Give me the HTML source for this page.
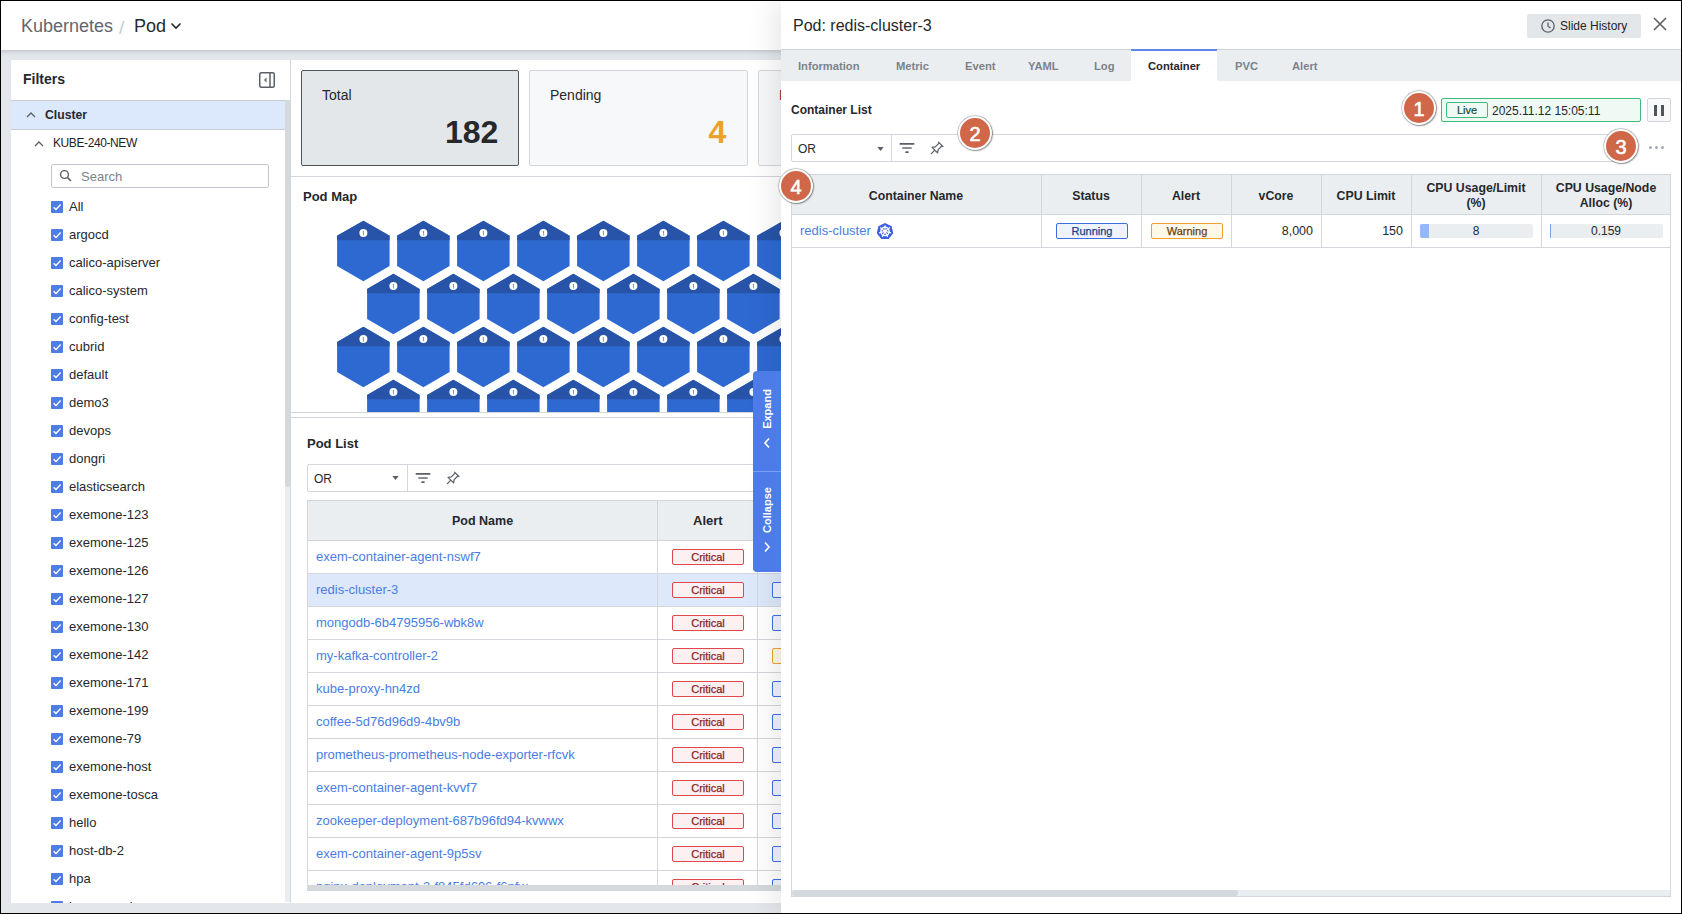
<!DOCTYPE html><html><head><meta charset="utf-8"><title>Pod</title><style>
*{box-sizing:border-box;margin:0;padding:0}
html,body{width:1682px;height:914px;overflow:hidden}
body{position:relative;background:#e3e6ea;font-family:"Liberation Sans",sans-serif;color:#25282c}
.a{position:absolute}
.a>svg{display:block}
.t{position:absolute;white-space:nowrap;line-height:1}
.cb{position:absolute;width:12px;height:12px;background:#4d7ce8;border-radius:1px}
.cb svg{position:absolute;left:0;top:0}
.lbl{position:absolute;white-space:nowrap;font-size:13px;line-height:16px;color:#25282c}
.link{color:#4a7de4}
.badge{position:absolute;height:16px;border:1px solid;border-radius:2px;font-size:11px;line-height:14px;text-align:center}
.crit{border-color:#e0474c;background:#fdf0f0;color:#8a1f1f;-webkit-text-stroke:0.25px #8a1f1f}
.circ{position:absolute;width:34px;height:34px;border-radius:50%;background:#d06749;border:2px solid #fff;box-shadow:0 0 1px 0.5px rgba(0,0,0,.4),1px 1px 1.5px rgba(0,0,0,.3);color:#fff;font-size:20px;font-weight:400;-webkit-text-stroke:0.6px #fff;line-height:32px;text-align:center}
</style></head><body>
<div class="a" style="left:0;top:0;width:1682px;height:50px;background:#fff"></div>
<div class="a" style="left:0;top:50px;width:1682px;height:8px;background:linear-gradient(#c6cacf 0px,#d4d8dc 2px,#dfe2e6 4px,#e3e6ea 6px)"></div>
<div class="t" style="left:21px;top:17px;font-size:18px;color:#5f6670">Kubernetes</div>
<div class="t" style="left:119px;top:18px;font-size:19px;color:#c6cad0">/</div>
<div class="t" style="left:134px;top:17px;font-size:18px;color:#25282c">Pod</div>
<svg class="a" style="left:170px;top:21px" width="12" height="10" viewBox="0 0 12 10"><path d="M1.5 2.5 L6 7 L10.5 2.5" fill="none" stroke="#25282c" stroke-width="1.6"/></svg>
<div class="a" style="left:11px;top:60px;width:280px;height:843px;background:#fff;border-right:1px solid #d3d6db"></div>
<div class="t" style="left:23px;top:72px;font-size:14px;font-weight:700">Filters</div>
<svg class="a" style="left:259px;top:72px" width="16" height="16" viewBox="0 0 16 16"><rect x="0.75" y="0.75" width="14.5" height="14.5" rx="1.5" fill="none" stroke="#5b6068" stroke-width="1.5"/><line x1="11" y1="1" x2="11" y2="15" stroke="#5b6068" stroke-width="1.5"/><path d="M7.5 5.5 L5 8 L7.5 10.5 Z" fill="#5b6068"/></svg>
<div class="a" style="left:11px;top:100px;width:274px;height:30px;background:#dce8fb;border-top:1px solid #c9cdd3;border-bottom:1px solid #c9cdd3"></div>
<svg class="a" style="left:26px;top:111px" width="10" height="8" viewBox="0 0 10 8"><path d="M1 6 L5 2 L9 6" fill="none" stroke="#5b6068" stroke-width="1.3"/></svg>
<div class="t" style="left:45px;top:109px;font-size:12.2px;font-weight:700">Cluster</div>
<svg class="a" style="left:34px;top:140px" width="10" height="8" viewBox="0 0 10 8"><path d="M1 6 L5 2 L9 6" fill="none" stroke="#5b6068" stroke-width="1.3"/></svg>
<div class="t" style="left:53px;top:137px;font-size:12px;letter-spacing:-0.4px;color:#1f2226">KUBE-240-NEW</div>
<div class="a" style="left:51px;top:164px;width:218px;height:24px;border:1px solid #c4c8ce;border-radius:2px;background:#fff"></div>
<svg class="a" style="left:59px;top:169px" width="14" height="14" viewBox="0 0 14 14"><circle cx="5.5" cy="5.5" r="3.9" fill="none" stroke="#5b6068" stroke-width="1.4"/><line x1="8.4" y1="8.4" x2="12" y2="12" stroke="#5b6068" stroke-width="1.6"/></svg>
<div class="t" style="left:81px;top:170px;font-size:13px;color:#7b828c">Search</div>
<div class="a" style="left:285px;top:100px;width:5px;height:802px;background:#ebeef1"></div>
<div class="a" style="left:285px;top:100px;width:5px;height:387px;background:#d5d8dc;border-radius:0 0 2px 2px"></div>
<div class="cb" style="left:51px;top:201px"><svg width="12" height="12" viewBox="0 0 12 12"><path d="M2.6 6.2 L5 8.5 L9.6 3.6" fill="none" stroke="#fff" stroke-width="1.4"/></svg></div>
<div class="lbl" style="left:69px;top:199px">All</div>
<div class="cb" style="left:51px;top:229px"><svg width="12" height="12" viewBox="0 0 12 12"><path d="M2.6 6.2 L5 8.5 L9.6 3.6" fill="none" stroke="#fff" stroke-width="1.4"/></svg></div>
<div class="lbl" style="left:69px;top:227px">argocd</div>
<div class="cb" style="left:51px;top:257px"><svg width="12" height="12" viewBox="0 0 12 12"><path d="M2.6 6.2 L5 8.5 L9.6 3.6" fill="none" stroke="#fff" stroke-width="1.4"/></svg></div>
<div class="lbl" style="left:69px;top:255px">calico-apiserver</div>
<div class="cb" style="left:51px;top:285px"><svg width="12" height="12" viewBox="0 0 12 12"><path d="M2.6 6.2 L5 8.5 L9.6 3.6" fill="none" stroke="#fff" stroke-width="1.4"/></svg></div>
<div class="lbl" style="left:69px;top:283px">calico-system</div>
<div class="cb" style="left:51px;top:313px"><svg width="12" height="12" viewBox="0 0 12 12"><path d="M2.6 6.2 L5 8.5 L9.6 3.6" fill="none" stroke="#fff" stroke-width="1.4"/></svg></div>
<div class="lbl" style="left:69px;top:311px">config-test</div>
<div class="cb" style="left:51px;top:341px"><svg width="12" height="12" viewBox="0 0 12 12"><path d="M2.6 6.2 L5 8.5 L9.6 3.6" fill="none" stroke="#fff" stroke-width="1.4"/></svg></div>
<div class="lbl" style="left:69px;top:339px">cubrid</div>
<div class="cb" style="left:51px;top:369px"><svg width="12" height="12" viewBox="0 0 12 12"><path d="M2.6 6.2 L5 8.5 L9.6 3.6" fill="none" stroke="#fff" stroke-width="1.4"/></svg></div>
<div class="lbl" style="left:69px;top:367px">default</div>
<div class="cb" style="left:51px;top:397px"><svg width="12" height="12" viewBox="0 0 12 12"><path d="M2.6 6.2 L5 8.5 L9.6 3.6" fill="none" stroke="#fff" stroke-width="1.4"/></svg></div>
<div class="lbl" style="left:69px;top:395px">demo3</div>
<div class="cb" style="left:51px;top:425px"><svg width="12" height="12" viewBox="0 0 12 12"><path d="M2.6 6.2 L5 8.5 L9.6 3.6" fill="none" stroke="#fff" stroke-width="1.4"/></svg></div>
<div class="lbl" style="left:69px;top:423px">devops</div>
<div class="cb" style="left:51px;top:453px"><svg width="12" height="12" viewBox="0 0 12 12"><path d="M2.6 6.2 L5 8.5 L9.6 3.6" fill="none" stroke="#fff" stroke-width="1.4"/></svg></div>
<div class="lbl" style="left:69px;top:451px">dongri</div>
<div class="cb" style="left:51px;top:481px"><svg width="12" height="12" viewBox="0 0 12 12"><path d="M2.6 6.2 L5 8.5 L9.6 3.6" fill="none" stroke="#fff" stroke-width="1.4"/></svg></div>
<div class="lbl" style="left:69px;top:479px">elasticsearch</div>
<div class="cb" style="left:51px;top:509px"><svg width="12" height="12" viewBox="0 0 12 12"><path d="M2.6 6.2 L5 8.5 L9.6 3.6" fill="none" stroke="#fff" stroke-width="1.4"/></svg></div>
<div class="lbl" style="left:69px;top:507px">exemone-123</div>
<div class="cb" style="left:51px;top:537px"><svg width="12" height="12" viewBox="0 0 12 12"><path d="M2.6 6.2 L5 8.5 L9.6 3.6" fill="none" stroke="#fff" stroke-width="1.4"/></svg></div>
<div class="lbl" style="left:69px;top:535px">exemone-125</div>
<div class="cb" style="left:51px;top:565px"><svg width="12" height="12" viewBox="0 0 12 12"><path d="M2.6 6.2 L5 8.5 L9.6 3.6" fill="none" stroke="#fff" stroke-width="1.4"/></svg></div>
<div class="lbl" style="left:69px;top:563px">exemone-126</div>
<div class="cb" style="left:51px;top:593px"><svg width="12" height="12" viewBox="0 0 12 12"><path d="M2.6 6.2 L5 8.5 L9.6 3.6" fill="none" stroke="#fff" stroke-width="1.4"/></svg></div>
<div class="lbl" style="left:69px;top:591px">exemone-127</div>
<div class="cb" style="left:51px;top:621px"><svg width="12" height="12" viewBox="0 0 12 12"><path d="M2.6 6.2 L5 8.5 L9.6 3.6" fill="none" stroke="#fff" stroke-width="1.4"/></svg></div>
<div class="lbl" style="left:69px;top:619px">exemone-130</div>
<div class="cb" style="left:51px;top:649px"><svg width="12" height="12" viewBox="0 0 12 12"><path d="M2.6 6.2 L5 8.5 L9.6 3.6" fill="none" stroke="#fff" stroke-width="1.4"/></svg></div>
<div class="lbl" style="left:69px;top:647px">exemone-142</div>
<div class="cb" style="left:51px;top:677px"><svg width="12" height="12" viewBox="0 0 12 12"><path d="M2.6 6.2 L5 8.5 L9.6 3.6" fill="none" stroke="#fff" stroke-width="1.4"/></svg></div>
<div class="lbl" style="left:69px;top:675px">exemone-171</div>
<div class="cb" style="left:51px;top:705px"><svg width="12" height="12" viewBox="0 0 12 12"><path d="M2.6 6.2 L5 8.5 L9.6 3.6" fill="none" stroke="#fff" stroke-width="1.4"/></svg></div>
<div class="lbl" style="left:69px;top:703px">exemone-199</div>
<div class="cb" style="left:51px;top:733px"><svg width="12" height="12" viewBox="0 0 12 12"><path d="M2.6 6.2 L5 8.5 L9.6 3.6" fill="none" stroke="#fff" stroke-width="1.4"/></svg></div>
<div class="lbl" style="left:69px;top:731px">exemone-79</div>
<div class="cb" style="left:51px;top:761px"><svg width="12" height="12" viewBox="0 0 12 12"><path d="M2.6 6.2 L5 8.5 L9.6 3.6" fill="none" stroke="#fff" stroke-width="1.4"/></svg></div>
<div class="lbl" style="left:69px;top:759px">exemone-host</div>
<div class="cb" style="left:51px;top:789px"><svg width="12" height="12" viewBox="0 0 12 12"><path d="M2.6 6.2 L5 8.5 L9.6 3.6" fill="none" stroke="#fff" stroke-width="1.4"/></svg></div>
<div class="lbl" style="left:69px;top:787px">exemone-tosca</div>
<div class="cb" style="left:51px;top:817px"><svg width="12" height="12" viewBox="0 0 12 12"><path d="M2.6 6.2 L5 8.5 L9.6 3.6" fill="none" stroke="#fff" stroke-width="1.4"/></svg></div>
<div class="lbl" style="left:69px;top:815px">hello</div>
<div class="cb" style="left:51px;top:845px"><svg width="12" height="12" viewBox="0 0 12 12"><path d="M2.6 6.2 L5 8.5 L9.6 3.6" fill="none" stroke="#fff" stroke-width="1.4"/></svg></div>
<div class="lbl" style="left:69px;top:843px">host-db-2</div>
<div class="cb" style="left:51px;top:873px"><svg width="12" height="12" viewBox="0 0 12 12"><path d="M2.6 6.2 L5 8.5 L9.6 3.6" fill="none" stroke="#fff" stroke-width="1.4"/></svg></div>
<div class="lbl" style="left:69px;top:871px">hpa</div>
<div class="cb" style="left:51px;top:901px"><svg width="12" height="12" viewBox="0 0 12 12"><path d="M2.6 6.2 L5 8.5 L9.6 3.6" fill="none" stroke="#fff" stroke-width="1.4"/></svg></div>
<div class="lbl" style="left:69px;top:899px">ingress-nginx</div>
<div class="a" style="left:0;top:903px;width:1682px;height:11px;background:#e3e6ea"></div>
<div class="a" style="left:291px;top:60px;width:1391px;height:843px;background:#fff"></div>
<div class="a" style="left:301px;top:70px;width:218px;height:96px;background:#e4e7ea;border:1.5px solid #50555c;border-radius:2px"></div>
<div class="t" style="left:322px;top:88px;font-size:14px">Total</div>
<div class="t" style="left:445px;top:116px;font-size:32px;font-weight:700;color:#25282c">182</div>
<div class="a" style="left:529px;top:70px;width:219px;height:96px;background:#f7f8fa;border:1px solid #d3d6db;border-radius:2px"></div>
<div class="t" style="left:550px;top:88px;font-size:14px">Pending</div>
<div class="t" style="left:708.5px;top:116px;font-size:32px;font-weight:700;color:#eba12a">4</div>
<div class="a" style="left:758px;top:70px;width:219px;height:96px;background:#f7f8fa;border:1px solid #d3d6db;border-radius:2px"></div>
<div class="t" style="left:779px;top:88px;font-size:14px;color:#6a1b2b">F</div>
<div class="a" style="left:291px;top:176px;width:1391px;height:1px;background:#d3d6db"></div>
<div class="t" style="left:303px;top:190px;font-size:13px;font-weight:700">Pod Map</div>
<svg class="a" style="left:291px;top:210px" width="500" height="203" viewBox="291 210 500 203"><defs><clipPath id="cap"><rect x="0" y="0" width="2000" height="1"/></clipPath></defs><polygon points="363.4,220.7 389.6,235.8 389.6,266.1 363.4,281.3 337.1,266.1 337.1,235.8" fill="#2e69d2"/><polygon points="363.4,220.7 389.6,235.8 389.6,240.3 337.1,240.3 337.1,235.8" fill="#2754a8"/><circle cx="363.4" cy="233.0" r="4" fill="#fff"/><path d="M362.80 230.90 L363.90 230.90 L363.65 235.50 L363.05 235.50 Z" fill="#6088cc"/><polygon points="423.4,220.7 449.6,235.8 449.6,266.1 423.4,281.3 397.1,266.1 397.1,235.8" fill="#2e69d2"/><polygon points="423.4,220.7 449.6,235.8 449.6,240.3 397.1,240.3 397.1,235.8" fill="#2754a8"/><circle cx="423.4" cy="233.0" r="4" fill="#fff"/><path d="M422.80 230.90 L423.90 230.90 L423.65 235.50 L423.05 235.50 Z" fill="#6088cc"/><polygon points="483.4,220.7 509.6,235.8 509.6,266.1 483.4,281.3 457.1,266.1 457.1,235.8" fill="#2e69d2"/><polygon points="483.4,220.7 509.6,235.8 509.6,240.3 457.1,240.3 457.1,235.8" fill="#2754a8"/><circle cx="483.4" cy="233.0" r="4" fill="#fff"/><path d="M482.80 230.90 L483.90 230.90 L483.65 235.50 L483.05 235.50 Z" fill="#6088cc"/><polygon points="543.4,220.7 569.6,235.8 569.6,266.1 543.4,281.3 517.1,266.1 517.1,235.8" fill="#2e69d2"/><polygon points="543.4,220.7 569.6,235.8 569.6,240.3 517.1,240.3 517.1,235.8" fill="#2754a8"/><circle cx="543.4" cy="233.0" r="4" fill="#fff"/><path d="M542.80 230.90 L543.90 230.90 L543.65 235.50 L543.05 235.50 Z" fill="#6088cc"/><polygon points="603.4,220.7 629.6,235.8 629.6,266.1 603.4,281.3 577.1,266.1 577.1,235.8" fill="#2e69d2"/><polygon points="603.4,220.7 629.6,235.8 629.6,240.3 577.1,240.3 577.1,235.8" fill="#2754a8"/><circle cx="603.4" cy="233.0" r="4" fill="#fff"/><path d="M602.80 230.90 L603.90 230.90 L603.65 235.50 L603.05 235.50 Z" fill="#6088cc"/><polygon points="663.4,220.7 689.6,235.8 689.6,266.1 663.4,281.3 637.1,266.1 637.1,235.8" fill="#2e69d2"/><polygon points="663.4,220.7 689.6,235.8 689.6,240.3 637.1,240.3 637.1,235.8" fill="#2754a8"/><circle cx="663.4" cy="233.0" r="4" fill="#fff"/><path d="M662.80 230.90 L663.90 230.90 L663.65 235.50 L663.05 235.50 Z" fill="#6088cc"/><polygon points="723.4,220.7 749.6,235.8 749.6,266.1 723.4,281.3 697.1,266.1 697.1,235.8" fill="#2e69d2"/><polygon points="723.4,220.7 749.6,235.8 749.6,240.3 697.1,240.3 697.1,235.8" fill="#2754a8"/><circle cx="723.4" cy="233.0" r="4" fill="#fff"/><path d="M722.80 230.90 L723.90 230.90 L723.65 235.50 L723.05 235.50 Z" fill="#6088cc"/><polygon points="783.4,220.7 809.6,235.8 809.6,266.1 783.4,281.3 757.1,266.1 757.1,235.8" fill="#2e69d2"/><polygon points="783.4,220.7 809.6,235.8 809.6,240.3 757.1,240.3 757.1,235.8" fill="#2754a8"/><circle cx="783.4" cy="233.0" r="4" fill="#fff"/><path d="M782.80 230.90 L783.90 230.90 L783.65 235.50 L783.05 235.50 Z" fill="#6088cc"/><polygon points="843.4,220.7 869.6,235.8 869.6,266.1 843.4,281.3 817.1,266.1 817.1,235.8" fill="#2e69d2"/><polygon points="843.4,220.7 869.6,235.8 869.6,240.3 817.1,240.3 817.1,235.8" fill="#2754a8"/><circle cx="843.4" cy="233.0" r="4" fill="#fff"/><path d="M842.80 230.90 L843.90 230.90 L843.65 235.50 L843.05 235.50 Z" fill="#6088cc"/><polygon points="393.4,273.7 419.6,288.9 419.6,319.1 393.4,334.3 367.1,319.1 367.1,288.9" fill="#2e69d2"/><polygon points="393.4,273.7 419.6,288.9 419.6,293.3 367.1,293.3 367.1,288.9" fill="#2754a8"/><circle cx="393.4" cy="286.0" r="4" fill="#fff"/><path d="M392.80 283.90 L393.90 283.90 L393.65 288.50 L393.05 288.50 Z" fill="#6088cc"/><polygon points="453.4,273.7 479.6,288.9 479.6,319.1 453.4,334.3 427.1,319.1 427.1,288.9" fill="#2e69d2"/><polygon points="453.4,273.7 479.6,288.9 479.6,293.3 427.1,293.3 427.1,288.9" fill="#2754a8"/><circle cx="453.4" cy="286.0" r="4" fill="#fff"/><path d="M452.80 283.90 L453.90 283.90 L453.65 288.50 L453.05 288.50 Z" fill="#6088cc"/><polygon points="513.4,273.7 539.6,288.9 539.6,319.1 513.4,334.3 487.1,319.1 487.1,288.9" fill="#2e69d2"/><polygon points="513.4,273.7 539.6,288.9 539.6,293.3 487.1,293.3 487.1,288.9" fill="#2754a8"/><circle cx="513.4" cy="286.0" r="4" fill="#fff"/><path d="M512.80 283.90 L513.90 283.90 L513.65 288.50 L513.05 288.50 Z" fill="#6088cc"/><polygon points="573.4,273.7 599.6,288.9 599.6,319.1 573.4,334.3 547.1,319.1 547.1,288.9" fill="#2e69d2"/><polygon points="573.4,273.7 599.6,288.9 599.6,293.3 547.1,293.3 547.1,288.9" fill="#2754a8"/><circle cx="573.4" cy="286.0" r="4" fill="#fff"/><path d="M572.80 283.90 L573.90 283.90 L573.65 288.50 L573.05 288.50 Z" fill="#6088cc"/><polygon points="633.4,273.7 659.6,288.9 659.6,319.1 633.4,334.3 607.1,319.1 607.1,288.9" fill="#2e69d2"/><polygon points="633.4,273.7 659.6,288.9 659.6,293.3 607.1,293.3 607.1,288.9" fill="#2754a8"/><circle cx="633.4" cy="286.0" r="4" fill="#fff"/><path d="M632.80 283.90 L633.90 283.90 L633.65 288.50 L633.05 288.50 Z" fill="#6088cc"/><polygon points="693.4,273.7 719.6,288.9 719.6,319.1 693.4,334.3 667.1,319.1 667.1,288.9" fill="#2e69d2"/><polygon points="693.4,273.7 719.6,288.9 719.6,293.3 667.1,293.3 667.1,288.9" fill="#2754a8"/><circle cx="693.4" cy="286.0" r="4" fill="#fff"/><path d="M692.80 283.90 L693.90 283.90 L693.65 288.50 L693.05 288.50 Z" fill="#6088cc"/><polygon points="753.4,273.7 779.6,288.9 779.6,319.1 753.4,334.3 727.1,319.1 727.1,288.9" fill="#2e69d2"/><polygon points="753.4,273.7 779.6,288.9 779.6,293.3 727.1,293.3 727.1,288.9" fill="#2754a8"/><circle cx="753.4" cy="286.0" r="4" fill="#fff"/><path d="M752.80 283.90 L753.90 283.90 L753.65 288.50 L753.05 288.50 Z" fill="#6088cc"/><polygon points="813.4,273.7 839.6,288.9 839.6,319.1 813.4,334.3 787.1,319.1 787.1,288.9" fill="#2e69d2"/><polygon points="813.4,273.7 839.6,288.9 839.6,293.3 787.1,293.3 787.1,288.9" fill="#2754a8"/><circle cx="813.4" cy="286.0" r="4" fill="#fff"/><path d="M812.80 283.90 L813.90 283.90 L813.65 288.50 L813.05 288.50 Z" fill="#6088cc"/><polygon points="873.4,273.7 899.6,288.9 899.6,319.1 873.4,334.3 847.1,319.1 847.1,288.9" fill="#2e69d2"/><polygon points="873.4,273.7 899.6,288.9 899.6,293.3 847.1,293.3 847.1,288.9" fill="#2754a8"/><circle cx="873.4" cy="286.0" r="4" fill="#fff"/><path d="M872.80 283.90 L873.90 283.90 L873.65 288.50 L873.05 288.50 Z" fill="#6088cc"/><polygon points="363.4,326.7 389.6,341.9 389.6,372.1 363.4,387.3 337.1,372.1 337.1,341.9" fill="#2e69d2"/><polygon points="363.4,326.7 389.6,341.9 389.6,346.3 337.1,346.3 337.1,341.9" fill="#2754a8"/><circle cx="363.4" cy="339.0" r="4" fill="#fff"/><path d="M362.80 336.90 L363.90 336.90 L363.65 341.50 L363.05 341.50 Z" fill="#6088cc"/><polygon points="423.4,326.7 449.6,341.9 449.6,372.1 423.4,387.3 397.1,372.1 397.1,341.9" fill="#2e69d2"/><polygon points="423.4,326.7 449.6,341.9 449.6,346.3 397.1,346.3 397.1,341.9" fill="#2754a8"/><circle cx="423.4" cy="339.0" r="4" fill="#fff"/><path d="M422.80 336.90 L423.90 336.90 L423.65 341.50 L423.05 341.50 Z" fill="#6088cc"/><polygon points="483.4,326.7 509.6,341.9 509.6,372.1 483.4,387.3 457.1,372.1 457.1,341.9" fill="#2e69d2"/><polygon points="483.4,326.7 509.6,341.9 509.6,346.3 457.1,346.3 457.1,341.9" fill="#2754a8"/><circle cx="483.4" cy="339.0" r="4" fill="#fff"/><path d="M482.80 336.90 L483.90 336.90 L483.65 341.50 L483.05 341.50 Z" fill="#6088cc"/><polygon points="543.4,326.7 569.6,341.9 569.6,372.1 543.4,387.3 517.1,372.1 517.1,341.9" fill="#2e69d2"/><polygon points="543.4,326.7 569.6,341.9 569.6,346.3 517.1,346.3 517.1,341.9" fill="#2754a8"/><circle cx="543.4" cy="339.0" r="4" fill="#fff"/><path d="M542.80 336.90 L543.90 336.90 L543.65 341.50 L543.05 341.50 Z" fill="#6088cc"/><polygon points="603.4,326.7 629.6,341.9 629.6,372.1 603.4,387.3 577.1,372.1 577.1,341.9" fill="#2e69d2"/><polygon points="603.4,326.7 629.6,341.9 629.6,346.3 577.1,346.3 577.1,341.9" fill="#2754a8"/><circle cx="603.4" cy="339.0" r="4" fill="#fff"/><path d="M602.80 336.90 L603.90 336.90 L603.65 341.50 L603.05 341.50 Z" fill="#6088cc"/><polygon points="663.4,326.7 689.6,341.9 689.6,372.1 663.4,387.3 637.1,372.1 637.1,341.9" fill="#2e69d2"/><polygon points="663.4,326.7 689.6,341.9 689.6,346.3 637.1,346.3 637.1,341.9" fill="#2754a8"/><circle cx="663.4" cy="339.0" r="4" fill="#fff"/><path d="M662.80 336.90 L663.90 336.90 L663.65 341.50 L663.05 341.50 Z" fill="#6088cc"/><polygon points="723.4,326.7 749.6,341.9 749.6,372.1 723.4,387.3 697.1,372.1 697.1,341.9" fill="#2e69d2"/><polygon points="723.4,326.7 749.6,341.9 749.6,346.3 697.1,346.3 697.1,341.9" fill="#2754a8"/><circle cx="723.4" cy="339.0" r="4" fill="#fff"/><path d="M722.80 336.90 L723.90 336.90 L723.65 341.50 L723.05 341.50 Z" fill="#6088cc"/><polygon points="783.4,326.7 809.6,341.9 809.6,372.1 783.4,387.3 757.1,372.1 757.1,341.9" fill="#2e69d2"/><polygon points="783.4,326.7 809.6,341.9 809.6,346.3 757.1,346.3 757.1,341.9" fill="#2754a8"/><circle cx="783.4" cy="339.0" r="4" fill="#fff"/><path d="M782.80 336.90 L783.90 336.90 L783.65 341.50 L783.05 341.50 Z" fill="#6088cc"/><polygon points="843.4,326.7 869.6,341.9 869.6,372.1 843.4,387.3 817.1,372.1 817.1,341.9" fill="#2e69d2"/><polygon points="843.4,326.7 869.6,341.9 869.6,346.3 817.1,346.3 817.1,341.9" fill="#2754a8"/><circle cx="843.4" cy="339.0" r="4" fill="#fff"/><path d="M842.80 336.90 L843.90 336.90 L843.65 341.50 L843.05 341.50 Z" fill="#6088cc"/><polygon points="393.4,379.7 419.6,394.9 419.6,425.1 393.4,440.3 367.1,425.1 367.1,394.9" fill="#2e69d2"/><polygon points="393.4,379.7 419.6,394.9 419.6,399.3 367.1,399.3 367.1,394.9" fill="#2754a8"/><circle cx="393.4" cy="392.0" r="4" fill="#fff"/><path d="M392.80 389.90 L393.90 389.90 L393.65 394.50 L393.05 394.50 Z" fill="#6088cc"/><polygon points="453.4,379.7 479.6,394.9 479.6,425.1 453.4,440.3 427.1,425.1 427.1,394.9" fill="#2e69d2"/><polygon points="453.4,379.7 479.6,394.9 479.6,399.3 427.1,399.3 427.1,394.9" fill="#2754a8"/><circle cx="453.4" cy="392.0" r="4" fill="#fff"/><path d="M452.80 389.90 L453.90 389.90 L453.65 394.50 L453.05 394.50 Z" fill="#6088cc"/><polygon points="513.4,379.7 539.6,394.9 539.6,425.1 513.4,440.3 487.1,425.1 487.1,394.9" fill="#2e69d2"/><polygon points="513.4,379.7 539.6,394.9 539.6,399.3 487.1,399.3 487.1,394.9" fill="#2754a8"/><circle cx="513.4" cy="392.0" r="4" fill="#fff"/><path d="M512.80 389.90 L513.90 389.90 L513.65 394.50 L513.05 394.50 Z" fill="#6088cc"/><polygon points="573.4,379.7 599.6,394.9 599.6,425.1 573.4,440.3 547.1,425.1 547.1,394.9" fill="#2e69d2"/><polygon points="573.4,379.7 599.6,394.9 599.6,399.3 547.1,399.3 547.1,394.9" fill="#2754a8"/><circle cx="573.4" cy="392.0" r="4" fill="#fff"/><path d="M572.80 389.90 L573.90 389.90 L573.65 394.50 L573.05 394.50 Z" fill="#6088cc"/><polygon points="633.4,379.7 659.6,394.9 659.6,425.1 633.4,440.3 607.1,425.1 607.1,394.9" fill="#2e69d2"/><polygon points="633.4,379.7 659.6,394.9 659.6,399.3 607.1,399.3 607.1,394.9" fill="#2754a8"/><circle cx="633.4" cy="392.0" r="4" fill="#fff"/><path d="M632.80 389.90 L633.90 389.90 L633.65 394.50 L633.05 394.50 Z" fill="#6088cc"/><polygon points="693.4,379.7 719.6,394.9 719.6,425.1 693.4,440.3 667.1,425.1 667.1,394.9" fill="#2e69d2"/><polygon points="693.4,379.7 719.6,394.9 719.6,399.3 667.1,399.3 667.1,394.9" fill="#2754a8"/><circle cx="693.4" cy="392.0" r="4" fill="#fff"/><path d="M692.80 389.90 L693.90 389.90 L693.65 394.50 L693.05 394.50 Z" fill="#6088cc"/><polygon points="753.4,379.7 779.6,394.9 779.6,425.1 753.4,440.3 727.1,425.1 727.1,394.9" fill="#2e69d2"/><polygon points="753.4,379.7 779.6,394.9 779.6,399.3 727.1,399.3 727.1,394.9" fill="#2754a8"/><circle cx="753.4" cy="392.0" r="4" fill="#fff"/><path d="M752.80 389.90 L753.90 389.90 L753.65 394.50 L753.05 394.50 Z" fill="#6088cc"/><polygon points="813.4,379.7 839.6,394.9 839.6,425.1 813.4,440.3 787.1,425.1 787.1,394.9" fill="#2e69d2"/><polygon points="813.4,379.7 839.6,394.9 839.6,399.3 787.1,399.3 787.1,394.9" fill="#2754a8"/><circle cx="813.4" cy="392.0" r="4" fill="#fff"/><path d="M812.80 389.90 L813.90 389.90 L813.65 394.50 L813.05 394.50 Z" fill="#6088cc"/><polygon points="873.4,379.7 899.6,394.9 899.6,425.1 873.4,440.3 847.1,425.1 847.1,394.9" fill="#2e69d2"/><polygon points="873.4,379.7 899.6,394.9 899.6,399.3 847.1,399.3 847.1,394.9" fill="#2754a8"/><circle cx="873.4" cy="392.0" r="4" fill="#fff"/><path d="M872.80 389.90 L873.90 389.90 L873.65 394.50 L873.05 394.50 Z" fill="#6088cc"/></svg>
<div class="a" style="left:291px;top:412px;width:1391px;height:1px;background:#d3d6db"></div>
<div class="a" style="left:291px;top:417px;width:1391px;height:1px;background:#d3d6db"></div>
<div class="t" style="left:307px;top:437px;font-size:13px;font-weight:700">Pod List</div>
<div class="a" style="left:307px;top:464px;width:1000px;height:28px;border:1px solid #d3d6db;border-radius:2px"></div>
<div class="a" style="left:407px;top:464px;width:1px;height:28px;background:#d3d6db"></div>
<div class="t" style="left:314px;top:473px;font-size:12px">OR</div>
<svg class="a" style="left:392px;top:476px" width="7" height="4" viewBox="0 0 8 5"><path d="M0 0 L8 0 L4 5 Z" fill="#5b6068"/></svg>
<div class="a" style="left:415px;top:473px"><svg width="16" height="11" viewBox="0 0 16 11"><rect x="0.6" y="0.1" width="14.8" height="1.6" rx="0.5" fill="#5b6068"/><rect x="3.2" y="4.2" width="9.6" height="1.6" rx="0.5" fill="#666b73"/><rect x="6.3" y="8.3" width="3.4" height="1.6" rx="0.5" fill="#5b6068"/></svg></div>
<div class="a" style="left:444px;top:469px"><svg width="18" height="18" viewBox="0 0 18 18"><g transform="translate(12.7,5.3) rotate(45)" fill="none" stroke="#5b6068" stroke-width="1.25" stroke-linejoin="round" stroke-linecap="round"><path d="M-3.15,0 L3.15,0 M-2,0 L-2,5.6 L-3.9,8.3 L3.9,8.3 L2,5.6 L2,0 M0,8.3 L0,13.2"/></g></svg></div>
<div class="a" style="left:307px;top:500px;width:1000px;height:391px;border:1px solid #d3d6db;overflow:hidden">
<div class="a" style="left:0;top:0;width:1000px;height:40px;background:#ebeef1;border-bottom:1px solid #d3d6db"></div>
<div class="t" style="left:144px;top:14px;font-size:12.5px;font-weight:700">Pod Name</div>
<div class="t" style="left:385px;top:13px;font-size:13px;font-weight:700">Alert</div>
<div class="a" style="left:349px;top:0;width:1px;height:400px;background:#d3d6db"></div>
<div class="a" style="left:449px;top:0;width:1px;height:400px;background:#d3d6db"></div>
<div class="a" style="left:0;top:40px;width:1000px;height:33px;background:#fff;border-bottom:1px solid #d3d6db"></div>
<div class="lbl link" style="left:8px;top:48px">exem-container-agent-nswf7</div>
<div class="badge crit" style="left:364px;top:48px;width:72px">Critical</div>
<div class="badge" style="left:464px;top:48px;width:72px;border-color:#3b6fe0;background:#eef3fd"></div>
<div class="a" style="left:0;top:73px;width:1000px;height:33px;background:#dde8fa;border-bottom:1px solid #d3d6db"></div>
<div class="lbl link" style="left:8px;top:81px">redis-cluster-3</div>
<div class="badge crit" style="left:364px;top:81px;width:72px">Critical</div>
<div class="badge" style="left:464px;top:81px;width:72px;border-color:#3b6fe0;background:#eef3fd"></div>
<div class="a" style="left:0;top:106px;width:1000px;height:33px;background:#fff;border-bottom:1px solid #d3d6db"></div>
<div class="lbl link" style="left:8px;top:114px">mongodb-6b4795956-wbk8w</div>
<div class="badge crit" style="left:364px;top:114px;width:72px">Critical</div>
<div class="badge" style="left:464px;top:114px;width:72px;border-color:#3b6fe0;background:#eef3fd"></div>
<div class="a" style="left:0;top:139px;width:1000px;height:33px;background:#fff;border-bottom:1px solid #d3d6db"></div>
<div class="lbl link" style="left:8px;top:147px">my-kafka-controller-2</div>
<div class="badge crit" style="left:364px;top:147px;width:72px">Critical</div>
<div class="badge" style="left:464px;top:147px;width:72px;border-color:#f0a030;background:#fef8e8"></div>
<div class="a" style="left:0;top:172px;width:1000px;height:33px;background:#fff;border-bottom:1px solid #d3d6db"></div>
<div class="lbl link" style="left:8px;top:180px">kube-proxy-hn4zd</div>
<div class="badge crit" style="left:364px;top:180px;width:72px">Critical</div>
<div class="badge" style="left:464px;top:180px;width:72px;border-color:#3b6fe0;background:#eef3fd"></div>
<div class="a" style="left:0;top:205px;width:1000px;height:33px;background:#fff;border-bottom:1px solid #d3d6db"></div>
<div class="lbl link" style="left:8px;top:213px">coffee-5d76d96d9-4bv9b</div>
<div class="badge crit" style="left:364px;top:213px;width:72px">Critical</div>
<div class="badge" style="left:464px;top:213px;width:72px;border-color:#3b6fe0;background:#eef3fd"></div>
<div class="a" style="left:0;top:238px;width:1000px;height:33px;background:#fff;border-bottom:1px solid #d3d6db"></div>
<div class="lbl link" style="left:8px;top:246px">prometheus-prometheus-node-exporter-rfcvk</div>
<div class="badge crit" style="left:364px;top:246px;width:72px">Critical</div>
<div class="badge" style="left:464px;top:246px;width:72px;border-color:#3b6fe0;background:#eef3fd"></div>
<div class="a" style="left:0;top:271px;width:1000px;height:33px;background:#fff;border-bottom:1px solid #d3d6db"></div>
<div class="lbl link" style="left:8px;top:279px">exem-container-agent-kvvf7</div>
<div class="badge crit" style="left:364px;top:279px;width:72px">Critical</div>
<div class="badge" style="left:464px;top:279px;width:72px;border-color:#3b6fe0;background:#eef3fd"></div>
<div class="a" style="left:0;top:304px;width:1000px;height:33px;background:#fff;border-bottom:1px solid #d3d6db"></div>
<div class="lbl link" style="left:8px;top:312px">zookeeper-deployment-687b96fd94-kvwwx</div>
<div class="badge crit" style="left:364px;top:312px;width:72px">Critical</div>
<div class="badge" style="left:464px;top:312px;width:72px;border-color:#3b6fe0;background:#eef3fd"></div>
<div class="a" style="left:0;top:337px;width:1000px;height:33px;background:#fff;border-bottom:1px solid #d3d6db"></div>
<div class="lbl link" style="left:8px;top:345px">exem-container-agent-9p5sv</div>
<div class="badge crit" style="left:364px;top:345px;width:72px">Critical</div>
<div class="badge" style="left:464px;top:345px;width:72px;border-color:#3b6fe0;background:#eef3fd"></div>
<div class="a" style="left:0;top:370px;width:1000px;height:33px;background:#fff;border-bottom:1px solid #d3d6db"></div>
<div class="lbl link" style="left:8px;top:378px">nginx-deployment-3-f845fd696-f6nfw</div>
<div class="badge crit" style="left:364px;top:378px;width:72px">Critical</div>
<div class="badge" style="left:464px;top:378px;width:72px;border-color:#3b6fe0;background:#eef3fd"></div>
<div class="a" style="left:349px;top:0;width:1px;height:400px;background:#d3d6db"></div>
<div class="a" style="left:449px;top:0;width:1px;height:400px;background:#d3d6db"></div>
<div class="a" style="left:0;top:384px;width:1000px;height:6px;background:#d5d8dc"></div>
</div>
<div class="a" style="left:781px;top:0;width:901px;height:914px;background:#fff;box-shadow:-8px 0 26px rgba(0,0,0,.09)"></div>
<div class="t" style="left:793px;top:18px;font-size:16px">Pod: redis-cluster-3</div>
<div class="a" style="left:1527px;top:14px;width:114px;height:24px;background:#e4e7ea;border-radius:2px"></div>
<svg class="a" style="left:1540px;top:18px" width="16" height="16" viewBox="0 0 16 16"><circle cx="8" cy="8" r="6.2" fill="none" stroke="#5b6068" stroke-width="1.3"/><path d="M8 4.5 L8 8.2 L10.5 10" fill="none" stroke="#5b6068" stroke-width="1.3"/></svg>
<div class="t" style="left:1560px;top:20px;font-size:12px;color:#1f2226">Slide History</div>
<svg class="a" style="left:1652px;top:16px" width="16" height="16" viewBox="0 0 16 16"><path d="M2 2 L14 14 M14 2 L2 14" stroke="#5b6068" stroke-width="1.6"/></svg>
<div class="a" style="left:781px;top:49px;width:900px;height:32px;background:#ebeef1;border-top:1px solid #cfd3d8"></div>
<div class="a" style="left:1131px;top:49px;width:86px;height:32px;background:#fff;border-top:2px solid #5d88ea"></div>
<div class="t" style="left:798px;top:60.5px;font-size:11.2px;font-weight:700;color:#7b828c">Information</div>
<div class="t" style="left:896px;top:60.5px;font-size:11.2px;font-weight:700;color:#7b828c">Metric</div>
<div class="t" style="left:965px;top:60.5px;font-size:11.2px;font-weight:700;color:#7b828c">Event</div>
<div class="t" style="left:1028px;top:60.5px;font-size:11.2px;font-weight:700;color:#7b828c">YAML</div>
<div class="t" style="left:1094px;top:60.5px;font-size:11.2px;font-weight:700;color:#7b828c">Log</div>
<div class="t" style="left:1148px;top:60.5px;font-size:11.2px;font-weight:700;color:#25282c">Container</div>
<div class="t" style="left:1235px;top:60.5px;font-size:11.2px;font-weight:700;color:#7b828c">PVC</div>
<div class="t" style="left:1292px;top:60.5px;font-size:11.2px;font-weight:700;color:#7b828c">Alert</div>
<div class="t" style="left:791px;top:104px;font-size:12px;font-weight:700">Container List</div>
<div class="a" style="left:1441px;top:98px;width:200px;height:24px;border:1px solid #3dbb7c;background:#eefaf3;border-radius:2px"></div>
<div class="a" style="left:1446px;top:102px;width:42px;height:16px;border:1px solid #3dbb7c;border-radius:2px;background:#eefaf3"></div>
<div class="t" style="left:1457px;top:105px;font-size:11px;color:#174a38;-webkit-text-stroke:0.2px #174a38">Live</div>
<div class="t" style="left:1492px;top:104.7px;font-size:12px">2025.11.12 15:05:11</div>
<div class="a" style="left:1647px;top:98px;width:24px;height:24px;border:1px solid #d3d6db;background:#f7f8fa;border-radius:2px"></div>
<div class="a" style="left:1654px;top:105px;width:3px;height:11px;background:#50555c"></div>
<div class="a" style="left:1661px;top:105px;width:3px;height:11px;background:#50555c"></div>
<div class="a" style="left:791px;top:134px;width:838px;height:28px;border:1px solid #d3d6db;border-radius:2px"></div>
<div class="a" style="left:891px;top:134px;width:1px;height:28px;background:#d3d6db"></div>
<div class="t" style="left:798px;top:143px;font-size:12px">OR</div>
<svg class="a" style="left:877px;top:147px" width="7" height="4" viewBox="0 0 8 5"><path d="M0 0 L8 0 L4 5 Z" fill="#5b6068"/></svg>
<div class="a" style="left:899px;top:143px"><svg width="16" height="11" viewBox="0 0 16 11"><rect x="0.6" y="0.1" width="14.8" height="1.6" rx="0.5" fill="#5b6068"/><rect x="3.2" y="4.2" width="9.6" height="1.6" rx="0.5" fill="#666b73"/><rect x="6.3" y="8.3" width="3.4" height="1.6" rx="0.5" fill="#5b6068"/></svg></div>
<div class="a" style="left:928px;top:139px"><svg width="18" height="18" viewBox="0 0 18 18"><g transform="translate(12.7,5.3) rotate(45)" fill="none" stroke="#5b6068" stroke-width="1.25" stroke-linejoin="round" stroke-linecap="round"><path d="M-3.15,0 L3.15,0 M-2,0 L-2,5.6 L-3.9,8.3 L3.9,8.3 L2,5.6 L2,0 M0,8.3 L0,13.2"/></g></svg></div>
<div class="a" style="left:1649px;top:146px;width:3px;height:3px;border-radius:50%;background:#a3a9b2"></div>
<div class="a" style="left:1655px;top:146px;width:3px;height:3px;border-radius:50%;background:#a3a9b2"></div>
<div class="a" style="left:1661px;top:146px;width:3px;height:3px;border-radius:50%;background:#a3a9b2"></div>
<div class="a" style="left:791px;top:174px;width:880px;height:723px;border:1px solid #d3d6db"></div>
<div class="a" style="left:792px;top:175px;width:878px;height:40px;background:#ebeef1;border-bottom:1px solid #d3d6db"></div>
<div class="a" style="left:792px;top:247px;width:878px;height:1px;background:#d3d6db"></div>
<div class="a" style="left:1041px;top:175px;width:1px;height:73px;background:#d3d6db"></div>
<div class="a" style="left:1141px;top:175px;width:1px;height:73px;background:#d3d6db"></div>
<div class="a" style="left:1231px;top:175px;width:1px;height:73px;background:#d3d6db"></div>
<div class="a" style="left:1321px;top:175px;width:1px;height:73px;background:#d3d6db"></div>
<div class="a" style="left:1411px;top:175px;width:1px;height:73px;background:#d3d6db"></div>
<div class="a" style="left:1541px;top:175px;width:1px;height:73px;background:#d3d6db"></div>
<div class="t" style="left:916px;top:189.5px;font-size:12.3px;font-weight:700;transform:translateX(-50%);text-align:center">Container Name</div>
<div class="t" style="left:1091px;top:189.5px;font-size:12.3px;font-weight:700;transform:translateX(-50%);text-align:center">Status</div>
<div class="t" style="left:1186px;top:189.5px;font-size:12.3px;font-weight:700;transform:translateX(-50%);text-align:center">Alert</div>
<div class="t" style="left:1276px;top:189.5px;font-size:12.3px;font-weight:700;transform:translateX(-50%);text-align:center">vCore</div>
<div class="t" style="left:1366px;top:189.5px;font-size:12.3px;font-weight:700;transform:translateX(-50%);text-align:center">CPU Limit</div>
<div class="t" style="left:1476px;top:182px;font-size:12.3px;font-weight:700;transform:translateX(-50%);text-align:center">CPU Usage/Limit</div>
<div class="t" style="left:1476px;top:197px;font-size:12.3px;font-weight:700;transform:translateX(-50%);text-align:center">(%)</div>
<div class="t" style="left:1606px;top:182px;font-size:12.3px;font-weight:700;transform:translateX(-50%);text-align:center">CPU Usage/Node</div>
<div class="t" style="left:1606px;top:197px;font-size:12.3px;font-weight:700;transform:translateX(-50%);text-align:center">Alloc (%)</div>
<div class="lbl link" style="left:800px;top:223px">redis-cluster</div>
<svg class="a" style="left:876px;top:222px" width="18" height="18" viewBox="0 0 18 18"><polygon points="9.00,1.00 15.61,4.18 17.24,11.33 12.67,17.06 5.33,17.06 0.76,11.33 2.39,4.18" fill="#3b5fe0"/><circle cx="9" cy="9.45" r="4.1" fill="none" stroke="#fff" stroke-width="1.5"/><g stroke="#fff" stroke-width="1.2"><line x1="9" y1="9.45" x2="9.00" y2="3.25"/><line x1="9" y1="9.45" x2="13.85" y2="5.58"/><line x1="9" y1="9.45" x2="15.04" y2="10.83"/><line x1="9" y1="9.45" x2="11.69" y2="15.04"/><line x1="9" y1="9.45" x2="6.31" y2="15.04"/><line x1="9" y1="9.45" x2="2.96" y2="10.83"/><line x1="9" y1="9.45" x2="4.15" y2="5.58"/></g><circle cx="9" cy="9.45" r="1.4" fill="#fff"/></svg>
<div class="badge" style="left:1056px;top:223px;width:72px;border-color:#3b6fe0;background:#eef3fd;color:#1d3c8c;-webkit-text-stroke:0.25px #1d3c8c">Running</div>
<div class="badge" style="left:1151px;top:223px;width:72px;border-color:#f0a030;background:#fef8e8;color:#6b4210;-webkit-text-stroke:0.25px #6b4210">Warning</div>
<div class="t" style="left:1313px;top:225px;font-size:12.5px;transform:translateX(-100%)">8,000</div>
<div class="t" style="left:1403px;top:225px;font-size:12.5px;transform:translateX(-100%)">150</div>
<div class="a" style="left:1420px;top:224px;width:113px;height:14px;background:#ebeef1;border-radius:2px"></div>
<div class="a" style="left:1420px;top:224px;width:9px;height:14px;background:#93baf7;border-radius:2px 0 0 2px"></div>
<div class="t" style="left:1476px;top:225px;font-size:12px;transform:translateX(-50%)">8</div>
<div class="a" style="left:1550px;top:224px;width:113px;height:14px;background:#ebeef1;border-radius:2px"></div>
<div class="a" style="left:1550px;top:224px;width:1px;height:14px;background:#7aa2f0"></div>
<div class="t" style="left:1606px;top:225px;font-size:12px;transform:translateX(-50%)">0.159</div>
<div class="a" style="left:792px;top:890px;width:878px;height:6px;background:#ebeef1"></div>
<div class="a" style="left:792px;top:890px;width:446px;height:6px;background:#d5d8dc;border-radius:3px"></div>
<div class="a" style="left:753px;top:371px;width:28px;height:201px;background:#4d7ce8;border-radius:4px 0 0 4px"></div>
<div class="a" style="left:753px;top:471px;width:28px;height:1px;background:#7b9ff0"></div>
<div class="t" style="left:767px;top:409px;font-size:11px;font-weight:700;color:#fff;transform:translate(-50%,-50%) rotate(-90deg)">Expand</div>
<svg class="a" style="left:762px;top:437px" width="10" height="12" viewBox="0 0 10 12"><path d="M7 1.5 L3 6 L7 10.5" fill="none" stroke="#fff" stroke-width="1.6"/></svg>
<div class="t" style="left:767px;top:510px;font-size:11px;font-weight:700;color:#fff;transform:translate(-50%,-50%) rotate(-90deg)">Collapse</div>
<svg class="a" style="left:762px;top:541px" width="10" height="12" viewBox="0 0 10 12"><path d="M3 1.5 L7 6 L3 10.5" fill="none" stroke="#fff" stroke-width="1.6"/></svg>
<div class="circ" style="left:1402px;top:91px">1</div>
<div class="circ" style="left:958px;top:116px">2</div>
<div class="circ" style="left:1604px;top:129px">3</div>
<div class="circ" style="left:779px;top:169px">4</div>
<div class="a" style="left:0;top:0;width:1682px;height:914px;border:1px solid #000;pointer-events:none"></div>
</body></html>
